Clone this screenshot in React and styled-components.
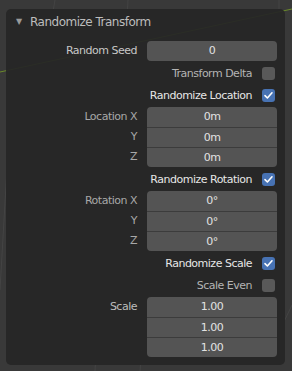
import React from "react";
import styled, { createGlobalStyle } from "styled-components";

const GlobalStyle = createGlobalStyle`
  html, body { margin: 0; padding: 0; background: #393939; }
  body { font-family: "DejaVu Sans", "Liberation Sans", sans-serif; }
  * { box-sizing: border-box; }
`;

const Viewport = styled.div`
  position: relative;
  width: 292px;
  height: 371px;
  overflow: hidden;
  background: #393939;
  padding: 9px 0 0 6px;
`;

const Backdrop = styled.svg`
  position: absolute;
  left: 0;
  top: 0;
  width: 292px;
  height: 371px;
`;

const Panel = styled.div`
  position: relative;
  width: 279px;
  height: 356px;
  border-radius: 5px;
  background: rgba(38, 38, 38, 0.93);
  display: flex;
  flex-direction: column;
`;

const Header = styled.div`
  height: 26px;
  display: flex;
  align-items: center;
  padding-left: 10px;
  gap: 6px;
  color: #bdbdbd;
  font-size: 12px;
  letter-spacing: -0.5px;
`;

const Arrow = styled.span`
  font-size: 8px;
  color: #9a9a9a;
  width: 8px;
  line-height: 1;
  letter-spacing: 0;
`;

const Body = styled.div`
  padding: 6px 8px 0 0;
  display: flex;
  flex-direction: column;
  gap: 2px;
  font-size: 11px;
  letter-spacing: -0.5px;
`;

const Row = styled.div`
  display: flex;
  align-items: flex-start;
  gap: 10px;
`;

const LabelCol = styled.div`
  width: 131px;
  display: flex;
  flex-direction: column;
`;

const Label = styled.div`
  height: 20px;
  line-height: 20px;
  text-align: right;
  color: ${(p) => p.$color || "#c4c4c4"};
  white-space: nowrap;
`;

const Field = styled.div`
  flex: 1;
  display: flex;
  flex-direction: column;
  background: #545454;
  border-radius: 4px;
  overflow: hidden;
`;

const Cell = styled.div`
  height: 20px;
  line-height: 20px;
  text-align: center;
  color: #e2e2e2;
  & + & {
    border-top: 1px solid #3c3c3c;
    line-height: 19px;
  }
`;

const CheckRow = styled.div`
  height: 20px;
  display: flex;
  align-items: center;
  justify-content: flex-end;
  gap: 10px;
  padding-right: 2px;
`;

const CheckLabel = styled.span`
  color: ${(p) => (p.$checked ? "#e6e6e6" : "#b4b4b4")};
  white-space: nowrap;
`;

const Box = styled.span`
  width: 13px;
  height: 13px;
  border-radius: 3px;
  background: ${(p) => (p.$checked ? "#4772b3" : "#595959")};
  display: flex;
  align-items: center;
  justify-content: center;
`;

function Check({ label, checked }) {
  return (
    <CheckRow>
      <CheckLabel $checked={checked}>{label}</CheckLabel>
      <Box $checked={checked}>
        {checked && (
          <svg width="11" height="11" viewBox="0 0 11 11">
            <path d="M2 5.6 L4.4 8 L9 2.8" fill="none" stroke="#ffffff" strokeWidth="1.6" strokeLinecap="round" strokeLinejoin="round" />
          </svg>
        )}
      </Box>
    </CheckRow>
  );
}

function Vector({ labels, values, color }) {
  return (
    <Row>
      <LabelCol>
        {labels.map((l, i) => (
          <Label key={i} $color={color}>{l}</Label>
        ))}
      </LabelCol>
      <Field>
        {values.map((v, i) => (
          <Cell key={i}>{v}</Cell>
        ))}
      </Field>
    </Row>
  );
}

export default function App() {
  return (
    <>
      <GlobalStyle />
      <Viewport>
        <Backdrop viewBox="0 0 292 371">
          <g stroke="#444444" strokeWidth="1" fill="none">
            <line x1="55" y1="0" x2="48" y2="40" />
            <line x1="128" y1="0" x2="126" y2="40" />
            <line x1="279" y1="0" x2="279" y2="20" />
            <line x1="0" y1="290" x2="8" y2="150" />
            <line x1="95" y1="371" x2="97" y2="330" />
            <line x1="140" y1="371" x2="143" y2="330" />
            <line x1="292" y1="305" x2="280" y2="330" />
          </g>
          <line x1="0" y1="72" x2="292" y2="9" stroke="#6b8a2a" strokeWidth="1" />
        </Backdrop>
        <Panel>
          <Header>
            <Arrow>▼</Arrow>
            <span>Randomize Transform</span>
          </Header>
          <Body>
            <Vector labels={["Random Seed"]} values={["0"]} color="#c8c8c8" />
            <Check label="Transform Delta" />
            <Check label="Randomize Location" checked />
            <Vector labels={["Location X", "Y", "Z"]} values={["0m", "0m", "0m"]} color="#a8a8a8" />
            <Check label="Randomize Rotation" checked />
            <Vector labels={["Rotation X", "Y", "Z"]} values={["0°", "0°", "0°"]} color="#a8a8a8" />
            <Check label="Randomize Scale" checked />
            <Check label="Scale Even" />
            <Vector labels={["Scale", "", ""]} values={["1.00", "1.00", "1.00"]} color="#bdbdbd" />
          </Body>
        </Panel>
      </Viewport>
    </>
  );
}
